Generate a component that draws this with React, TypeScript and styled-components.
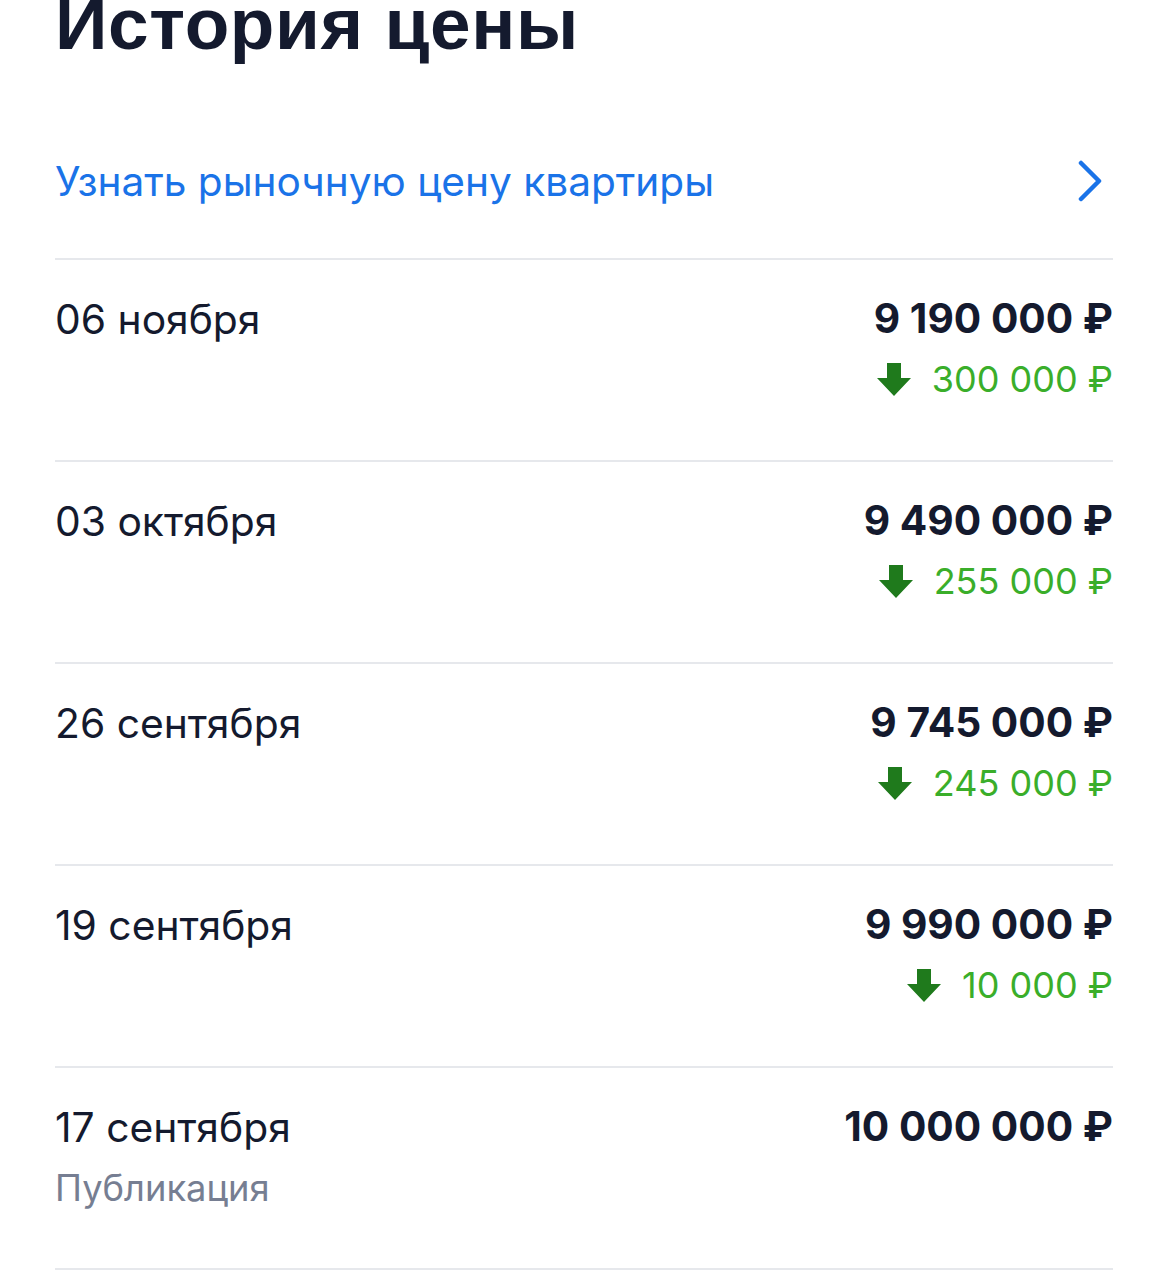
import { createGlobalStyle, styled } from "styled-components"

const GlobalStyle = createGlobalStyle`
  html, body {
    margin: 0;
    padding: 0;
    background: #ffffff;
  }
  body {
    font-family: Inter, "Noto Sans", sans-serif;
    color: #141a2e;
  }
`

interface PriceEntry {
  date: string
  price: string
  drop?: string
  note?: string
}

const history: PriceEntry[] = [
  { date: "06 ноября", price: "9 190 000 ₽", drop: "300 000 ₽" },
  { date: "03 октября", price: "9 490 000 ₽", drop: "255 000 ₽" },
  { date: "26 сентября", price: "9 745 000 ₽", drop: "245 000 ₽" },
  { date: "19 сентября", price: "9 990 000 ₽", drop: "10 000 ₽" },
  { date: "17 сентября", price: "10 000 000 ₽", note: "Публикация" },
]

const Page = styled.div`
  padding: 0 55px;
  overflow: hidden;
`

const Title = styled.h1`
  margin: -20px 0 0;
  font-family: "Liberation Sans", Arial, sans-serif;
  font-weight: 700;
  font-size: 73px;
  line-height: 88px;
  color: #141a2e;
  letter-spacing: 0.6px;
`

const MarketLink = styled.a`
  display: flex;
  align-items: center;
  justify-content: space-between;
  height: 156px;
  margin-top: 36px;
  padding-right: 9px;
  box-sizing: border-box;
  border-bottom: 2px solid #e6e8ec;
  color: #1a73e8;
  font-size: 40.6px;
  text-decoration: none;
  cursor: pointer;
`

const Row = styled.div`
  display: flex;
  justify-content: space-between;
  align-items: flex-start;
  height: 202px;
  padding-top: 33px;
  box-sizing: border-box;
  border-bottom: 2px solid #e6e8ec;
`

const DateCol = styled.div`
  display: flex;
  flex-direction: column;
  gap: 11px;
`

const DateText = styled.div`
  font-size: 40.8px;
  line-height: 52px;
  color: #141a2e;
`

const Note = styled.div`
  font-size: 36.3px;
  line-height: 48px;
  color: #767e92;
`

const PriceCol = styled.div`
  display: flex;
  flex-direction: column;
  align-items: flex-end;
  gap: 8px;
`

const Price = styled.div`
  font-size: 40.7px;
  line-height: 52px;
  font-weight: 700;
  color: #141a2e;
`

const Drop = styled.div`
  display: flex;
  align-items: center;
  gap: 20px;
  font-size: 36px;
  line-height: 52px;
  color: #3aae2a;
`

const DownArrow = () => (
  <svg width="36" height="36" viewBox="0 0 36 36">
    <path d="M11 2h14v15h10L18 35 1 17h10z" fill="#1f7a1c" />
  </svg>
)

const Chevron = () => (
  <svg width="28" height="42" viewBox="0 0 28 42" fill="none">
    <path
      d="M5 3l18 18L5 39"
      stroke="#1a73e8"
      strokeWidth="4.5"
      strokeLinecap="round"
      strokeLinejoin="round"
    />
  </svg>
)

export default function App() {
  return (
    <Page>
      <GlobalStyle />
      <Title>История цены</Title>
      <MarketLink>
        <span>Узнать рыночную цену квартиры</span>
        <Chevron />
      </MarketLink>
      {history.map((entry) => (
        <Row key={entry.date}>
          <DateCol>
            <DateText>{entry.date}</DateText>
            {entry.note && <Note>{entry.note}</Note>}
          </DateCol>
          <PriceCol>
            <Price>{entry.price}</Price>
            {entry.drop && (
              <Drop>
                <DownArrow />
                <span>{entry.drop}</span>
              </Drop>
            )}
          </PriceCol>
        </Row>
      ))}
    </Page>
  )
}
